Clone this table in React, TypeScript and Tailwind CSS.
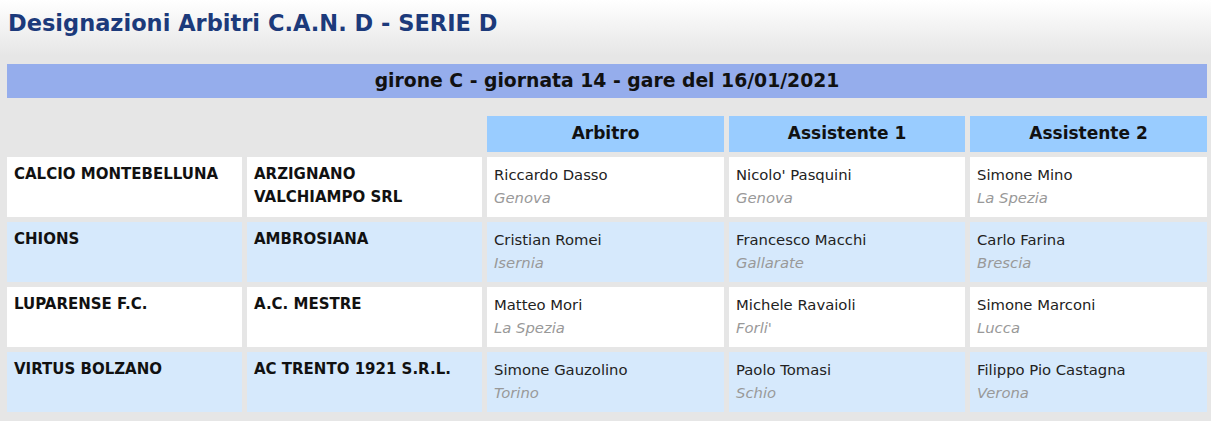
const matches = [
  {
    home: 'CALCIO MONTEBELLUNA',
    away: 'ARZIGNANO VALCHIAMPO SRL',
    refs: [
      ['Riccardo Dasso', 'Genova'],
      ["Nicolo' Pasquini", 'Genova'],
      ['Simone Mino', 'La Spezia'],
    ],
  },
  {
    home: 'CHIONS',
    away: 'AMBROSIANA',
    refs: [
      ['Cristian Romei', 'Isernia'],
      ['Francesco Macchi', 'Gallarate'],
      ['Carlo Farina', 'Brescia'],
    ],
  },
  {
    home: 'LUPARENSE F.C.',
    away: 'A.C. MESTRE',
    refs: [
      ['Matteo Mori', 'La Spezia'],
      ['Michele Ravaioli', "Forli'"],
      ['Simone Marconi', 'Lucca'],
    ],
  },
  {
    home: 'VIRTUS BOLZANO',
    away: 'AC TRENTO 1921 S.R.L.',
    refs: [
      ['Simone Gauzolino', 'Torino'],
      ['Paolo Tomasi', 'Schio'],
      ['Filippo Pio Castagna', 'Verona'],
    ],
  },
];

export default function App() {
  return (
    <div className="min-h-[421px] bg-[#e6e6e6] font-['DejaVu_Sans',Verdana,sans-serif] text-[#111]">
      <div className="h-[56px] bg-gradient-to-b from-white to-[#e6e6e6] px-[8px] pt-[8px]">
        <h1 className="text-[22.5px] font-bold leading-[30px] text-[#1c3a7b]">
          Designazioni Arbitri C.A.N. D - SERIE D
        </h1>
      </div>

      <div className="pl-[7px] pr-[4px]">
        <div className="mt-[8px] flex h-[34px] items-center justify-center bg-[#95adec] text-[18.8px] font-bold">
          girone C - giornata 14 - gare del 16/01/2021
        </div>

        <div className="mt-[18px] grid grid-cols-[235px_235px_237px_236px_237px] gap-x-[5px] gap-y-[5px]">
          <div />
          <div />
          {['Arbitro', 'Assistente 1', 'Assistente 2'].map((h) => (
            <div
              key={h}
              className="flex h-[36px] items-center justify-center bg-[#99ccff] text-[17px] font-bold"
            >
              {h}
            </div>
          ))}

          {matches.map((m, i) => {
            const bg = i % 2 === 0 ? 'bg-white' : 'bg-[#d6e9fc]';
            return [
              <div key={`${i}h`} className={`${bg} h-[60px] pl-[7px] pr-[14px] pt-[6px] text-[15px] font-bold leading-[23px]`}>
                {m.home}
              </div>,
              <div key={`${i}a`} className={`${bg} h-[60px] pl-[7px] pr-[14px] pt-[6px] text-[15px] font-bold leading-[23px]`}>
                {m.away}
              </div>,
              ...m.refs.map(([name, city], j) => (
                <div key={`${i}r${j}`} className={`${bg} h-[60px] px-[7px] pt-[6px] text-[14.8px] leading-[23px]`}>
                  <div className="text-[#222]">{name}</div>
                  <div className="italic text-[#999]">{city}</div>
                </div>
              )),
            ];
          })}
        </div>
      </div>
    </div>
  );
}
